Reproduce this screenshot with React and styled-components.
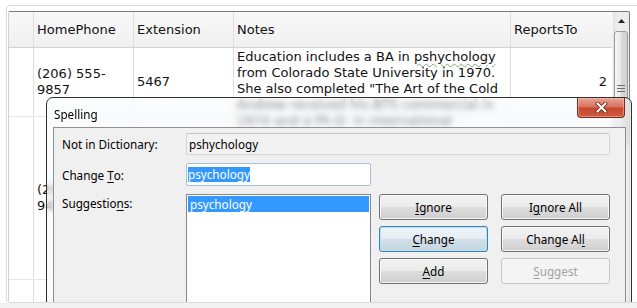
import React from "react";
import styled, { createGlobalStyle } from "styled-components";

const GlobalStyle = createGlobalStyle`
  html, body {
    margin: 0;
    padding: 0;
    background: #ffffff;
  }
  body {
    width: 637px;
    height: 308px;
    overflow: hidden;
  }
`;

const Screen = styled.div`
  width: 637px;
  height: 308px;
  overflow: hidden;
  display: flex;
  flex-direction: column;
  background: #ffffff;
`;

const Stage = styled.div`
  height: 303px;
  padding: 5px 0 0 6px;
  box-sizing: border-box;
  display: flex;
`;

const BottomStrip = styled.div`
  flex: 1;
  background: #f2f2f2;
`;

const Panel = styled.div`
  position: relative;
  width: 640px;
  flex-shrink: 0;
  box-sizing: border-box;
  border: 1px solid #dadada;
  border-radius: 4px;
  padding: 5px 0 0 1px;
  overflow: hidden;
`;

/* ---------- data grid ---------- */

const Grid = styled.div`
  display: flex;
  width: 622px;
  height: 320px;
  box-sizing: border-box;
  border-top: 1px solid #7b7b7b;
  border-right: 1px solid #7b7b7b;
  border-left: 1px solid #d2d2d2;
  border-radius: 2px 2px 0 0;
  background: #ffffff;
  font-family: "DejaVu Sans", Verdana, sans-serif;
  font-size: 13px;
  color: #111;
`;

const Table = styled.div`
  flex: 1;
  display: flex;
  flex-direction: column;
`;

const Row = styled.div`
  display: grid;
  grid-template-columns: 25px 100px 100px 277px 101px;
  grid-template-rows: 100%;
  height: ${(p) => p.$h}px;
  flex-shrink: 0;
  box-sizing: border-box;
  border-bottom: 1px solid ${(p) => (p.$header ? "#d3d3d3" : "#e6e6e6")};
  background: ${(p) =>
    p.$header ? "linear-gradient(#f8f8f8, #f0f0f0)" : "transparent"};
`;

const Cell = styled.div`
  box-sizing: border-box;
  min-height: 0;
  border-right: ${(p) => (p.$last ? "none" : "1px solid #dedede")};
  padding: ${(p) => (p.$top ? "1px 5px 0 3px" : "0 5px 0 3px")};
  display: flex;
  flex-direction: column;
  justify-content: ${(p) => (p.$top ? "flex-start" : "center")};
  align-items: ${(p) => (p.$right ? "flex-end" : "flex-start")};
  line-height: 16px;
  white-space: nowrap;
  overflow: visible;
`;

const Misspelled = styled.span`
  text-decoration: underline wavy #86a97a;
  text-decoration-thickness: 1px;
  text-underline-offset: 2px;
`;

const ScrollBar = styled.div`
  width: 17px;
  flex-shrink: 0;
  display: flex;
  flex-direction: column;
  background: linear-gradient(90deg, #e3e3e3, #efefef 40%, #ebebeb);
  border-left: 1px solid #f4f4f4;
  box-sizing: border-box;
`;

const ScrollArrow = styled.div`
  height: 17px;
  display: flex;
  align-items: center;
  justify-content: center;
`;

const Thumb = styled.div`
  margin: 2px 1px 0 1px;
  height: 112px;
  border: 1px solid #9a9a9a;
  border-radius: 3px;
  background: linear-gradient(90deg, #f6f6f6, #e8e8e8 45%, #d8d8d8 55%, #d2d2d2);
  display: flex;
  align-items: center;
  justify-content: center;
`;

/* ---------- spelling dialog ---------- */

const Dialog = styled.div`
  position: absolute;
  left: 39px;
  top: 91px;
  width: 586px;
  height: 260px;
  box-sizing: border-box;
  border: 1px solid #303030;
  border-radius: 7px 7px 0 0;
  padding: 0 5px 0 6px;
  background: rgba(246, 248, 250, 0.45);
  backdrop-filter: blur(3px);
  display: flex;
  flex-direction: column;
  font-family: "Noto Sans", "Open Sans", sans-serif;
  font-size: 11.7px;
  color: #000;
`;

const TitleBar = styled.div`
  height: 29px;
  flex-shrink: 0;
  display: flex;
  justify-content: space-between;
  align-items: flex-start;
`;

const Title = styled.div`
  padding: 8px 0 0 1px;
  line-height: 16px;
  color: #000;
`;

const CloseButton = styled.div`
  width: 48px;
  height: 20px;
  margin-right: 1px;
  box-sizing: border-box;
  border: 1px solid #7c2a1f;
  border-top: none;
  border-radius: 0 0 4px 4px;
  background: linear-gradient(#e7a495, #d9735f 45%, #c8472f 55%, #cd5b3f);
  box-shadow: inset 0 0 0 1px rgba(255, 210, 200, 0.45);
  display: flex;
  align-items: center;
  justify-content: center;
`;

const Client = styled.div`
  flex: 1;
  background: #f0f0f0;
  border: 1px solid #8e8e8e;
  padding: 5px 15px 0 8px;
  display: grid;
  grid-template-columns: 124px 424px;
  grid-auto-rows: min-content;
  row-gap: 8px;
`;

const Label = styled.div`
  display: flex;
  align-items: ${(p) => (p.$top ? "flex-start" : "center")};
  padding-top: ${(p) => (p.$top ? "1px" : "0")};
  line-height: 16px;
  white-space: pre;
`;

const U = styled.span`
  text-decoration: underline;
  text-underline-offset: 2px;
`;

const ReadOnlyField = styled.div`
  height: 22px;
  box-sizing: border-box;
  border: 1px solid #d6d6d6;
  border-top-color: #c4c4c4;
  border-radius: 2px;
  background: #f2f2f2;
  padding-left: 2px;
  display: flex;
  align-items: center;
`;

const TextInput = styled.div`
  width: 185px;
  height: 23px;
  box-sizing: border-box;
  border: 1px solid #a9c1da;
  border-radius: 2px;
  background: #ffffff;
  padding-left: 1px;
  display: flex;
  align-items: center;
`;

const Selected = styled.span`
  background: #3399ff;
  color: #ffffff;
  line-height: 15px;
`;

const SuggestRow = styled.div`
  display: flex;
  gap: 8px;
  align-items: flex-start;
`;

const ListBox = styled.div`
  width: 185px;
  height: 120px;
  box-sizing: border-box;
  border: 1px solid #828790;
  background: #ffffff;
  padding: 1px;
`;

const ListItem = styled.div`
  height: 16px;
  line-height: 16px;
  padding-left: 2px;
  background: ${(p) => (p.$selected ? "#3399ff" : "transparent")};
  color: ${(p) => (p.$selected ? "#ffffff" : "#000")};
`;

const ButtonGrid = styled.div`
  display: grid;
  grid-template-columns: 109px 109px;
  column-gap: 13px;
  row-gap: 6px;
`;

const Button = styled.div`
  height: 26px;
  box-sizing: border-box;
  border: 1px solid ${(p) =>
    p.$disabled ? "#c5c7c9" : p.$default ? "#3c7fb1" : "#707070"};
  border-radius: 3px;
  background: ${(p) =>
    p.$disabled
      ? "#f4f4f4"
      : p.$default
      ? "linear-gradient(#eef5fa 0%, #e4edf3 50%, #d3e0ea 51%, #c6d5e0 100%)"
      : "linear-gradient(#f2f2f2 0%, #ebebeb 50%, #dddddd 51%, #cfcfcf 100%)"};
  box-shadow: ${(p) =>
    p.$default
      ? "inset 0 0 0 1px #b7e2f6"
      : p.$disabled
      ? "none"
      : "inset 0 0 0 1px rgba(255, 255, 255, 0.75)"};
  color: ${(p) => (p.$disabled ? "#a2a2a2" : "#000")};
  display: flex;
  align-items: center;
  justify-content: center;
  line-height: 16px;
  white-space: pre;
`;

function CloseGlyph() {
  return (
    <svg width="13" height="11" viewBox="0 0 13 11">
      <path d="M2.5 1.5 L10.5 9.5 M10.5 1.5 L2.5 9.5" stroke="#5e1d14" strokeWidth="3.8" strokeLinecap="round" />
      <path d="M2.5 1.5 L10.5 9.5 M10.5 1.5 L2.5 9.5" stroke="#ffffff" strokeWidth="2.2" strokeLinecap="round" />
    </svg>
  );
}

function UpArrow() {
  return (
    <svg width="7" height="4" viewBox="0 0 7 4">
      <path d="M0 4 L3.5 0 L7 4 Z" fill="#222" />
    </svg>
  );
}

function Grip() {
  return (
    <svg width="8" height="7" viewBox="0 0 8 7">
      <path d="M0 0.5 H8 M0 3.5 H8 M0 6.5 H8" stroke="#6e6e6e" strokeWidth="1" />
    </svg>
  );
}

export default function App() {
  return (
    <Screen>
      <GlobalStyle />
      <Stage>
        <Panel>
          <Grid>
            <Table>
              <Row $header $h={36}>
                <Cell />
                <Cell>HomePhone</Cell>
                <Cell>Extension</Cell>
                <Cell>Notes</Cell>
                <Cell $last>ReportsTo</Cell>
              </Row>
              <Row $h={69}>
                <Cell />
                <Cell>
                  <div>(206) 555-</div>
                  <div>9857</div>
                </Cell>
                <Cell>5467</Cell>
                <Cell $top>
                  <div>
                    Education includes a BA in <Misspelled>pshychology</Misspelled>
                  </div>
                  <div>from Colorado State University in 1970.</div>
                  <div>She also completed "The Art of the Cold</div>
                  <div>Andrew received his BTS commercial in</div>
                  <div>1974 and a Ph.D. in international</div>
                </Cell>
                <Cell $last $right>2</Cell>
              </Row>
              <Row $h={163}>
                <Cell />
                <Cell>
                  <div>(206) 555-</div>
                  <div>9482</div>
                </Cell>
                <Cell>3457</Cell>
                <Cell />
                <Cell $last />
              </Row>
              <Row $h={60}>
                <Cell />
                <Cell />
                <Cell />
                <Cell />
                <Cell $last />
              </Row>
            </Table>
            <ScrollBar>
              <ScrollArrow>
                <UpArrow />
              </ScrollArrow>
              <Thumb>
                <Grip />
              </Thumb>
            </ScrollBar>
          </Grid>

          <Dialog>
            <TitleBar>
              <Title>Spelling</Title>
              <CloseButton>
                <CloseGlyph />
              </CloseButton>
            </TitleBar>
            <Client>
              <Label>Not in Dictionary:</Label>
              <ReadOnlyField>pshychology</ReadOnlyField>

              <Label>
                Change <U>T</U>o:
              </Label>
              <TextInput>
                <Selected>psychology</Selected>
              </TextInput>

              <Label $top>
                Suggestio<U>n</U>s:
              </Label>
              <SuggestRow>
                <ListBox>
                  <ListItem $selected>psychology</ListItem>
                </ListBox>
                <ButtonGrid>
                  <Button>
                    <span>
                      <U>I</U>gnore
                    </span>
                  </Button>
                  <Button>
                    <span>
                      I<U>g</U>nore All
                    </span>
                  </Button>
                  <Button $default>
                    <span>
                      <U>C</U>hange
                    </span>
                  </Button>
                  <Button>
                    <span>
                      Change Al<U>l</U>
                    </span>
                  </Button>
                  <Button>
                    <span>
                      <U>A</U>dd
                    </span>
                  </Button>
                  <Button $disabled>
                    <span>
                      <U>S</U>uggest
                    </span>
                  </Button>
                </ButtonGrid>
              </SuggestRow>
            </Client>
          </Dialog>
        </Panel>
      </Stage>
      <BottomStrip />
    </Screen>
  );
}
